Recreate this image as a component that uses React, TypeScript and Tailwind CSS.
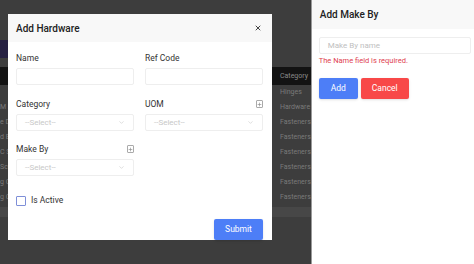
import { X, ChevronDown, Plus } from "lucide-react";

const rows = ["Hinges", "Hardware", "Fasteners", "Fasteners", "Fasteners", "Fasteners", "Fasteners", "Fasteners"];
const leftBits = ["", "M Hinge", "e Door", "d Bolt", "C Screw", "Sc Nut", "g Clip", "g Clip"];

function Field({ label, plus, select }: { label: string; plus?: boolean; select?: boolean }) {
  return (
    <div className="flex flex-col">
      <div className="flex h-[10px] items-center justify-between mb-[5px]">
        <span className="text-[8.5px] text-[#333]">{label}</span>
        {plus && (
          <span className="flex h-[8px] w-[7px] items-center justify-center border border-[#aaa] rounded-[1px]">
            <Plus className="h-[5px] w-[5px] text-[#888]" strokeWidth={3} />
          </span>
        )}
      </div>
      <div className="flex h-[17px] items-center justify-between rounded-[2px] border border-[#eeeeee] px-[8px]">
        {select && (
          <>
            <span className="text-[8px] text-[#c8c8c8]">--Select--</span>
            <ChevronDown className="h-[7px] w-[7px] text-[#c8c8c8]" />
          </>
        )}
      </div>
    </div>
  );
}

export default function App() {
  return (
    <div
      className="flex h-[264px] w-[474px] overflow-hidden bg-[#3d3d3d]"
      style={{ fontFamily: "Roboto, 'Liberation Sans', sans-serif" }}
    >
      {/* page behind backdrop */}
      <div className="relative flex-1">
        <div className="flex flex-col pt-[40px]">
          <div className="h-[18px] w-[40px] bg-[#262142]" />
          <div className="mt-[9px] flex h-[18px] items-center bg-[#131313]">
            <span className="ml-[280px] text-[7px] text-[#8a8a8a]">Category</span>
          </div>
          {rows.map((r, i) => (
            <div key={i} className="flex h-[15px] items-center">
              <span className="w-[60px] whitespace-nowrap text-[7px] text-[#7a7a7a]">{leftBits[i]}</span>
              <span className="ml-[220px] whitespace-nowrap text-[7px] text-[#7a7a7a]">{r}</span>
            </div>
          ))}
          <div className="mt-[2px] h-[10px] bg-[#474747]" />
        </div>

        {/* modal */}
        <div className="absolute left-[8px] top-[14px] flex h-[226px] w-[264px] flex-col bg-white">
          <div className="flex h-[30px] items-center justify-between bg-[#f8f8f8] pl-[8px] pr-[10px]">
            <span className="text-[10px] font-medium text-[#222]">Add Hardware</span>
            <X className="h-[8px] w-[8px] text-[#444]" strokeWidth={3} />
          </div>
          <div className="flex flex-1 flex-col px-[8px] pt-[11px]">
            <div className="grid grid-cols-2 gap-x-[11px] gap-y-[14px] pr-[1px]">
              <Field label="Name" />
              <Field label="Ref Code" />
              <Field label="Category" select />
              <Field label="UOM" plus select />
              <div className="-mt-[1px]">
                <Field label="Make By" plus select />
              </div>
            </div>
            <label className="mt-[18px] flex items-center gap-[5px]">
              <span className="h-[10px] w-[10px] rounded-[1px] border-[1.5px] border-[#7e8fd8]" />
              <span className="text-[8.5px] text-[#333]">Is Active</span>
            </label>
            <div className="mt-[12px] flex justify-end pr-[1px]">
              <button className="h-[21px] w-[49px] rounded-[2px] bg-[#4d7ef7] text-[8.5px] text-white shadow-sm">
                Submit
              </button>
            </div>
          </div>
        </div>
      </div>

      {/* right drawer */}
      <div className="flex w-[166px] flex-col border-l border-[#9a9a9a] bg-white">
        <div className="flex h-[29px] items-center bg-[#f8f8f8] pl-[8px]">
          <span className="text-[10px] font-medium text-[#222]">Add Make By</span>
        </div>
        <div className="flex flex-col px-[7px] pt-[8px]">
          <div className="flex h-[17px] w-[152px] items-center rounded-[2px] border border-[#eeeeee] px-[8px]">
            <span className="text-[8px] text-[#c0c0c0]">Make By name</span>
          </div>
          <span className="mt-[1px] text-[7.5px] text-[#e0404f]">The Name field is required.</span>
          <div className="mt-[12px] flex gap-[3px]">
            <button className="h-[21px] w-[39px] rounded-[2px] bg-[#4d7ef7] text-[8.5px] text-white shadow-sm">Add</button>
            <button className="h-[21px] w-[48px] rounded-[2px] bg-[#f84848] text-[8.5px] text-white shadow-sm">Cancel</button>
          </div>
        </div>
      </div>
    </div>
  );
}
